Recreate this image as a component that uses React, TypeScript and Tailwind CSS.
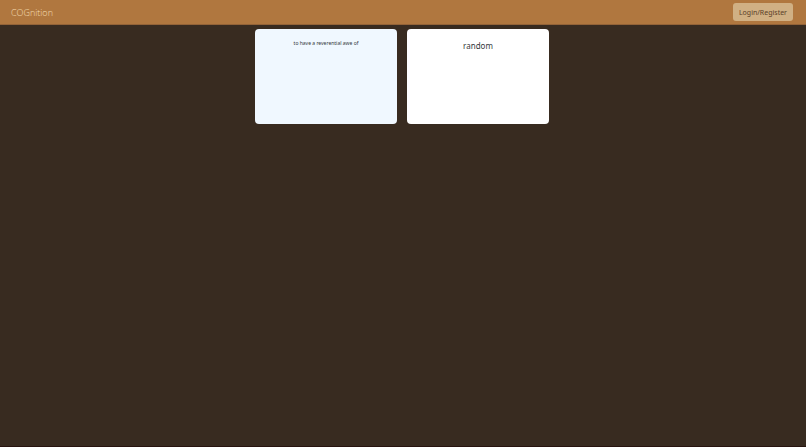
const cards = [
  { text: "to have a reverential awe of", style: "bg-[#f0f8ff] pt-[10px] text-[5px] leading-[8px]" },
  { text: "random", style: "bg-white pt-[10px] text-[8px] leading-[14px]" },
];

export default function App() {
  return (
    <div className="flex min-h-screen flex-col border-b border-[#28140f] bg-[#382b20] font-['Noto_Sans',sans-serif]">
      <header className="flex h-[25px] items-center justify-between border-b border-[#936338] bg-[#b0773f] pr-[13px] pl-[11px]">
        <a href="#" className="pt-px font-['Open_Sans',sans-serif] text-[9px] leading-[14px] font-light text-[#f5deb3]">
          COGnition
        </a>
        <button
          type="button"
          className="h-[18px] rounded-[3px] bg-[#d0b084] px-[6px] pt-px text-[7px] leading-[17px] text-[#5a4028]"
        >
          Login/Register
        </button>
      </header>
      <main className="flex justify-center gap-[10px] pt-[4px] pr-[2px]">
        {cards.map((card) => (
          <article
            key={card.text}
            className={`h-[95px] w-[142px] rounded-[4px] text-center text-[#33373b] ${card.style}`}
          >
            <p>{card.text}</p>
          </article>
        ))}
      </main>
    </div>
  );
}
